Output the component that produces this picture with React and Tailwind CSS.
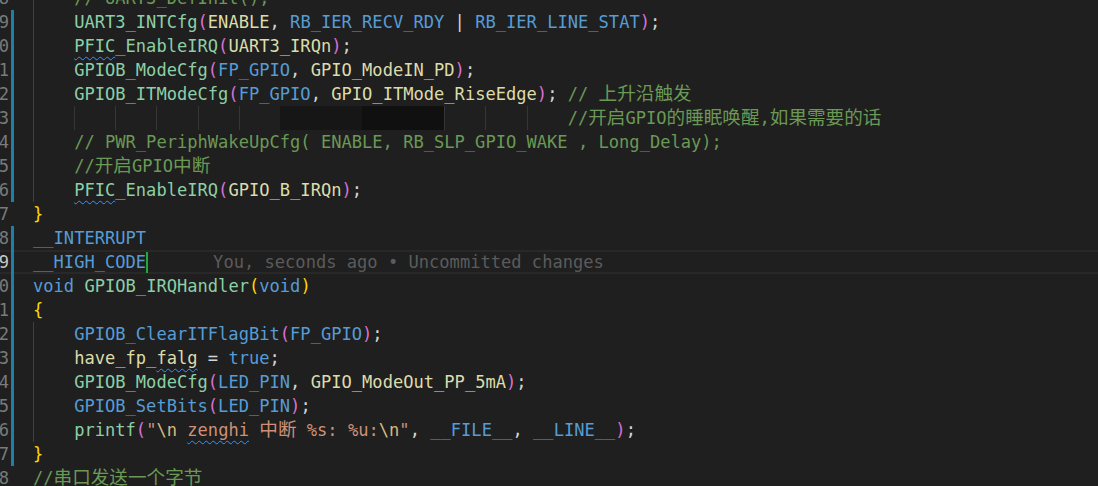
import React from "react";

const COLOR = {
  fn: "text-[#8ccfa7]",
  en: "text-[#dcdcaa]",
  mac: "text-[#569cd6]",
  p: "text-[#d4d4d4]",
  cm: "text-[#6a9955]",
  str: "text-[#ce9178]",
  esc: "text-[#d7ba7d]",
  o: "text-[#da70d6]",
  g: "text-[#ffd700]",
};

const SQ =
  "underline decoration-wavy decoration-[#3794ff] decoration-1 underline-offset-[4px] [text-decoration-skip-ink:none]";

function withCjk(text) {
  const parts = text.split(/([\u3000-\u9fff\uff00-\uffef]+)/);
  return parts.map((part, i) =>
    /[\u3000-\u9fff\uff00-\uffef]/.test(part) ? (
      <span key={i} className="text-[18.6px]">
        {part}
      </span>
    ) : (
      part
    )
  );
}

const G = "border-l border-[#404040]";

const lines = [
  { n: 138, bar: false, cells: [G], toks: [["cm", "// UART3_DefInit();"]] },
  {
    n: 139,
    bar: true,
    cells: [G],
    toks: [
      ["fn", "UART3_INTCfg"],
      ["o", "("],
      ["en", "ENABLE"],
      ["p", ", "],
      ["mac", "RB_IER_RECV_RDY"],
      ["p", " | "],
      ["mac", "RB_IER_LINE_STAT"],
      ["o", ")"],
      ["p", ";"],
    ],
  },
  {
    n: 140,
    bar: true,
    cells: [G],
    toks: [
      ["fn", "PFIC", true],
      ["fn", "_EnableIRQ"],
      ["o", "("],
      ["en", "UART3_IRQn"],
      ["o", ")"],
      ["p", ";"],
    ],
  },
  {
    n: 141,
    bar: true,
    cells: [G],
    toks: [
      ["fn", "GPIOB_ModeCfg"],
      ["o", "("],
      ["mac", "FP_GPIO"],
      ["p", ", "],
      ["en", "GPIO_ModeIN_PD"],
      ["o", ")"],
      ["p", ";"],
    ],
  },
  {
    n: 142,
    bar: true,
    cells: [G],
    toks: [
      ["fn", "GPIOB_ITModeCfg"],
      ["o", "("],
      ["mac", "FP_GPIO"],
      ["p", ", "],
      ["en", "GPIO_ITMode_RiseEdge"],
      ["o", ")"],
      ["p", "; "],
      ["cm", "// 上升沿触发"],
    ],
  },
  {
    n: 143,
    bar: true,
    cells: [
      G,
      "border-l border-[#363636]",
      "border-l border-[#363636]",
      "border-l border-[#363636]",
      "border-l border-[#363636]",
      "border-l border-[#363636]",
      "bg-[#161616]",
      "bg-[#161616]",
      "bg-[#101010]",
      "bg-[#101010]",
      "border-l border-[#363636]",
      "border-l border-[#363636]",
      "border-l border-[#363636]",
    ],
    toks: [["cm", "//开启GPIO的睡眠唤醒,如果需要的话"]],
  },
  {
    n: 144,
    bar: true,
    cells: [G],
    toks: [["cm", "// PWR_PeriphWakeUpCfg( ENABLE, RB_SLP_GPIO_WAKE , Long_Delay);"]],
  },
  { n: 145, bar: true, cells: [G], toks: [["cm", "//开启GPIO中断"]] },
  {
    n: 146,
    bar: true,
    cells: [G],
    toks: [
      ["fn", "PFIC", true],
      ["fn", "_EnableIRQ"],
      ["o", "("],
      ["en", "GPIO_B_IRQn"],
      ["o", ")"],
      ["p", ";"],
    ],
  },
  { n: 147, bar: false, cells: [], toks: [["g", "}"]] },
  { n: 148, bar: true, cells: [], toks: [["mac", "__INTERRUPT"]] },
  { n: 149, bar: true, cells: [], current: true, toks: [["mac", "__HIGH_CODE"]] },
  {
    n: 150,
    bar: true,
    cells: [],
    toks: [
      ["mac", "void"],
      ["p", " "],
      ["fn", "GPIOB_IRQHandler"],
      ["g", "("],
      ["mac", "void"],
      ["g", ")"],
    ],
  },
  { n: 151, bar: true, cells: [], toks: [["g", "{"]] },
  {
    n: 152,
    bar: true,
    cells: [G],
    toks: [
      ["mac", "GPIOB_ClearITFlagBit"],
      ["o", "("],
      ["mac", "FP_GPIO"],
      ["o", ")"],
      ["p", ";"],
    ],
  },
  {
    n: 153,
    bar: true,
    cells: [G],
    toks: [
      ["en", "have_fp_"],
      ["en", "falg", true],
      ["p", " = "],
      ["mac", "true"],
      ["p", ";"],
    ],
  },
  {
    n: 154,
    bar: true,
    cells: [G],
    toks: [
      ["fn", "GPIOB_ModeCfg"],
      ["o", "("],
      ["mac", "LED_PIN"],
      ["p", ", "],
      ["en", "GPIO_ModeOut_PP_5mA"],
      ["o", ")"],
      ["p", ";"],
    ],
  },
  {
    n: 155,
    bar: true,
    cells: [G],
    toks: [
      ["mac", "GPIOB_SetBits"],
      ["o", "("],
      ["mac", "LED_PIN"],
      ["o", ")"],
      ["p", ";"],
    ],
  },
  {
    n: 156,
    bar: true,
    cells: [G],
    toks: [
      ["fn", "printf"],
      ["o", "("],
      ["str", "\""],
      ["esc", "\\n"],
      ["str", " "],
      ["str", "zenghi", true],
      ["str", " 中断 %s: %u:"],
      ["esc", "\\n"],
      ["str", "\""],
      ["p", ", "],
      ["mac", "__FILE__"],
      ["p", ", "],
      ["mac", "__LINE__"],
      ["o", ")"],
      ["p", ";"],
    ],
  },
  { n: 157, bar: true, cells: [], toks: [["g", "}"]] },
  { n: 158, bar: false, cells: [], toks: [["cm", "//串口发送一个字节"]] },
];

function Line({ line }) {
  return (
    <div
      className={
        "flex h-[24px] leading-[24px] shrink-0 " +
        (line.current ? "shadow-[inset_0_2px_0_#282828,inset_0_-2px_0_#282828]" : "")
      }
    >
      <div className="flex w-[33px] shrink-0">
        <div
          className={
            "flex w-[9px] justify-end overflow-hidden " +
            (line.current ? "text-[#c6c6c6]" : "text-[#7a7a7a]")
          }
        >
          {line.n}
        </div>
        <div className="w-[2px]" />
        <div className={line.bar ? "w-[3px] bg-[#1b81a8]" : "w-[3px]"} />
      </div>
      <div className="flex whitespace-pre">
        {line.cells.map((c, i) => (
          <div key={i} className={"w-[4ch] shrink-0 h-[24px] " + c} />
        ))}
        <div className="whitespace-pre">
          {line.toks.map(([t, text, sq], i) => (
            <span key={i} className={COLOR[t] + (sq ? " " + SQ : "")}>
              {withCjk(text)}
            </span>
          ))}
          {line.current && (
            <>
              <span className="inline-block w-[2px] h-[21px] align-[-5px] bg-[#1fa83d]" />
              <span className="pl-[65px] text-[#5b5b5b]">
                You, seconds ago • Uncommitted changes
              </span>
            </>
          )}
        </div>
      </div>
    </div>
  );
}

export default function App() {
  return (
    <div className="w-[1098px] h-[486px] overflow-hidden bg-[#1f1f1f] font-['DejaVu_Sans_Mono','Noto_Sans_CJK_SC',monospace] text-[17.08px]">
      <div className="flex flex-col -mt-[14px]">
        {lines.map((l) => (
          <Line key={l.n} line={l} />
        ))}
      </div>
    </div>
  );
}
